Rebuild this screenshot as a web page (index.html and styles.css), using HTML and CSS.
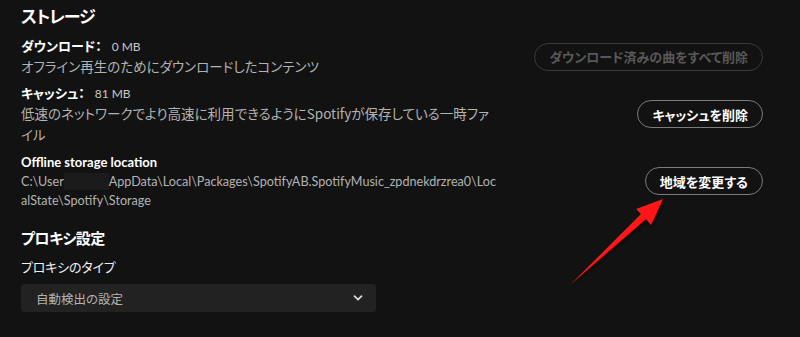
FILE: index.html
```html
<!DOCTYPE html>
<html lang="ja">
<head>
  <meta charset="UTF-8">
  <meta name="viewport" content="width=device-width, initial-scale=1.0">
  <title>設定 - ストレージ</title>
  <link rel="stylesheet" href="styles.css">
</head>
<body>
  <div class="settings">
    <h2 class="section-title">ストレージ</h2>

    <div class="setting-row row-download">
      <div class="setting-text">
        <div class="setting-label">ダウンロード：<span class="size">0 MB</span></div>
        <div class="setting-desc">オフライン再生のためにダウンロードしたコンテンツ</div>
      </div>
      <button class="pill-button" disabled>ダウンロード済みの曲をすべて削除</button>
    </div>

    <div class="setting-row row-cache">
      <div class="setting-text">
        <div class="setting-label">キャッシュ：<span class="size">81 MB</span></div>
        <div class="setting-desc">低速のネットワークでより高速に利用できるようにSpotifyが保存している一時ファイル</div>
      </div>
      <button class="pill-button">キャッシュを削除</button>
    </div>

    <div class="setting-row row-location">
      <div class="setting-text">
        <div class="setting-label latin">Offline storage location</div>
        <div class="setting-path">C:\User<span class="redacted"></span>AppData\Local\Packages\SpotifyAB.SpotifyMusic_zpdnekdrzrea0\LocalState\Spotify\Storage</div>
      </div>
      <button class="pill-button">地域を変更する</button>
    </div>

    <h2 class="section-title small">プロキシ設定</h2>
    <div class="field-label">プロキシのタイプ</div>
    <div class="select-box">
      <span>自動検出の設定</span>
      <svg class="chevron" width="10" height="6" viewBox="0 0 10 6">
        <path d="M1.5 1.2l3.5 3.4 3.5-3.4" fill="none" stroke="#d8d8d8" stroke-width="1.8" stroke-linecap="round" stroke-linejoin="round"/>
      </svg>
    </div>

    <!-- annotation arrow pointing at the button -->
    <svg class="annotation" width="115" height="105" viewBox="0 0 115 105">
      <defs>
        <filter id="shadow" x="-20%" y="-20%" width="140%" height="140%">
          <feDropShadow dx="1" dy="2" stdDeviation="1.5" flood-color="#000" flood-opacity="0.7"/>
        </filter>
      </defs>
      <polygon points="10,95 81,24 76,19 103,9 91,35 86,29" fill="#ff1414" filter="url(#shadow)"/>
    </svg>
  </div>
</body>
</html>
```

FILE: styles.css
```css
* {
  margin: 0;
  padding: 0;
  box-sizing: border-box;
}

body {
  background: #121212;
  color: #ffffff;
  font-family: "Noto Sans CJK JP", "Noto Sans", sans-serif;
  font-feature-settings: "palt";
  width: 800px;
  height: 337px;
  overflow: hidden;
}

.settings {
  position: relative;
  padding: 4px 37px 0 21px;
}

.section-title {
  font-size: 17px;
  font-weight: 700;
  line-height: 24px;
  letter-spacing: -1px;
  margin-bottom: 8px;
}

.section-title.small {
  font-size: 15px;
  line-height: 22px;
  letter-spacing: -0.5px;
  margin: 17px 0 8px;
}

.setting-row {
  display: flex;
  align-items: center;
  justify-content: space-between;
  gap: 20px;
}

.row-cache {
  margin-top: 6px;
}

.row-location {
  margin-top: 7px;
}

.setting-text {
  width: 476px;
}

.setting-label {
  font-size: 13px;
  font-weight: 700;
  line-height: 19px;
}

.setting-label.latin {
  font-family: "Lato", "Noto Sans CJK JP", sans-serif;
  line-height: 20px;
}

.size {
  font-family: "Lato", sans-serif;
  font-weight: 400;
  font-size: 12px;
  color: #c8c8c8;
  margin-left: 10px;
}

.setting-desc {
  font-size: 13.5px;
  line-height: 21px;
  color: #b3b3b3;
}

.setting-path {
  font-family: "Lato", sans-serif;
  font-size: 12.6px;
  line-height: 19px;
  color: #b3b3b3;
  word-break: break-all;
}

.redacted {
  display: inline-block;
  width: 45px;
  height: 17px;
  vertical-align: -4px;
  background: #1b1b1b;
}

.pill-button {
  flex-shrink: 0;
  height: 28px;
  padding: 0 14px;
  border: 1px solid #7c7c7c;
  border-radius: 14px;
  background: transparent;
  color: #ffffff;
  font-family: "Noto Sans CJK JP", sans-serif;
  font-feature-settings: "palt";
  font-size: 13px;
  font-weight: 700;
  cursor: pointer;
}

.pill-button:disabled {
  border-color: #3a3a3a;
  color: #585858;
  cursor: default;
}

.field-label {
  font-size: 13px;
  line-height: 20px;
  letter-spacing: -0.2px;
  color: #f0f0f0;
}

.select-box {
  margin-top: 7px;
  width: 355px;
  height: 28px;
  border-radius: 4px;
  background: #222222;
  display: flex;
  align-items: center;
  justify-content: space-between;
  padding: 0 13px 0 15px;
  font-size: 12.5px;
  color: #b3b3b3;
}

.annotation {
  position: absolute;
  left: 560px;
  top: 190px;
}
```
